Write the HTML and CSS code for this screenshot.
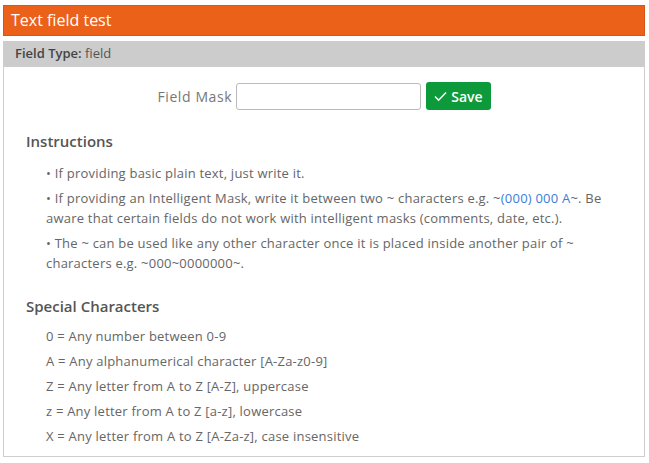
FILE: index.html
```html
<!DOCTYPE html>
<html lang="en">
<head>
    <meta charset="UTF-8">
    <meta name="viewport" content="width=device-width, initial-scale=1.0">
    <title>Text field test</title>
    <link rel="stylesheet" href="styles.css">
</head>
<body>
    <div class="page-title">Text field test</div>

    <div class="field-type"><b>Field Type:</b> field</div>

    <div class="panel">
        <form class="mask-form">
            <label for="mask">Field Mask</label>
            <input type="text" id="mask" name="mask">
            <button type="submit">
                <svg width="13" height="11" viewBox="0 0 13 11"><path d="M1 5.5 L4.6 9.2 L12 1.6" fill="none" stroke="#fff" stroke-width="1.5"/></svg>
                Save
            </button>
        </form>

        <h3>Instructions</h3>
        <div class="instructions">
            <p>&bull; If providing basic plain text, just write it.</p>
            <p><span>&bull; If providing an Intelligent Mask, write it between two ~ characters e.g. ~</span><span class="blue">(000) 000 A</span><span>~. Be</span> <span>aware that certain fields do not work with intelligent masks (comments, date, etc.).</span></p>
            <p><span>&bull; The ~ can be used like any other character once it is placed inside another pair of ~</span> <span>characters e.g. ~000~0000000~.</span></p>
        </div>

        <h3 class="special">Special Characters</h3>
        <ul class="chars">
            <li>0 = Any number between 0-9</li>
            <li>A = Any alphanumerical character [A-Za-z0-9]</li>
            <li>Z = Any letter from A to Z [A-Z], uppercase</li>
            <li>z = Any letter from A to Z [a-z], lowercase</li>
            <li>X = Any letter from A to Z [A-Za-z], case insensitive</li>
        </ul>
    </div>
</body>
</html>
```

FILE: styles.css
```css
body {
    font-family: "Open Sans", Arial, sans-serif;
    margin: 5px 4px 0 3px;
    color: #666;
    font-size: 13px;
    letter-spacing: 0.22px;
}
.page-title {
    background-color: #eb611a;
    border: 1px solid #d85616;
    color: white;
    font-size: 16px;
    letter-spacing: 0;
    height: 29px;
    line-height: 29px;
    padding-left: 7px;
}
.field-type {
    background-color: #cccccc;
    color: #555;
    margin-top: 5px;
    height: 26px;
    line-height: 25px;
    padding-left: 12px;
    font-size: 13px;
    letter-spacing: 0;
}
.field-type b {
    font-weight: 600;
    color: #444;
}
.panel {
    border: 1px solid #cfcfcf;
    border-top: none;
    padding: 0 0 4px 22px;
    height: 385px;
}
.mask-form {
    display: flex;
    justify-content: center;
    align-items: center;
    gap: 4px;
    padding-top: 15px;
    margin-right: 22px;
}
.mask-form label {
    font-size: 14px;
    letter-spacing: 0.6px;
    color: #777;
}
.mask-form input {
    width: 185px;
    height: 27px;
    box-sizing: border-box;
    border: 1px solid #bbb;
    border-radius: 3px;
    padding: 0 6px;
}
.mask-form button {
    background-color: #0d9a3b;
    color: white;
    border: none;
    border-radius: 3px;
    height: 28px;
    margin-left: 1px;
    padding: 0 8px;
    font-family: inherit;
    font-size: 14px;
    font-weight: 600;
    letter-spacing: 0;
    display: flex;
    align-items: center;
    gap: 4px;
    cursor: pointer;
}
h3 {
    font-size: 15px;
    font-weight: 600;
    letter-spacing: 0;
    color: #555;
    margin: 21px 0 12px 0;
}
h3.special {
    margin: 23px 0 8px 0;
}
.instructions {
    padding-left: 20px;
    padding-right: 17px;
}
.instructions p {
    margin: 0 0 5px 0;
    line-height: 20px;
}
.blue {
    color: #3b7dd8;
}
.chars {
    list-style: none;
    padding-left: 20px;
    margin: 0;
}
.chars li {
    line-height: 25px;
}
```
